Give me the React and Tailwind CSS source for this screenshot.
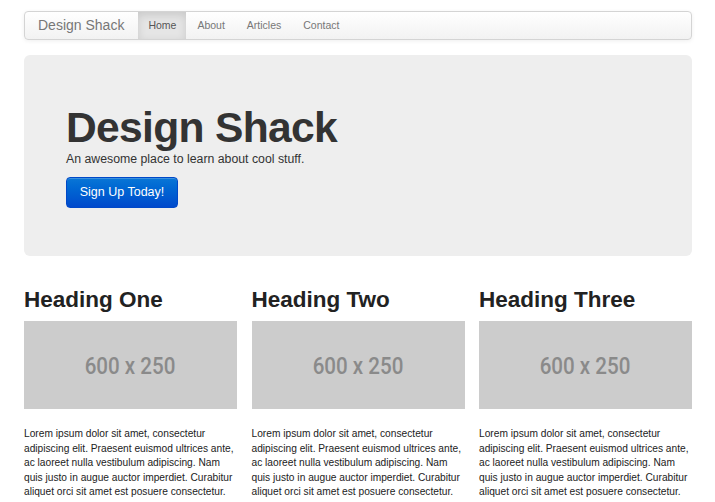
import React from "react";

const columns = ["Heading One", "Heading Two", "Heading Three"];

const lorem =
  "Lorem ipsum dolor sit amet, consectetur adipiscing elit. Praesent euismod ultrices ante, ac laoreet nulla vestibulum adipiscing. Nam quis justo in augue auctor imperdiet. Curabitur aliquet orci sit amet est posuere consectetur.";

export default function App() {
  return (
    <div className="min-h-[502px] bg-white pl-6 pr-[23px] pt-[11px] text-[#333] font-['Liberation_Sans',Arial,sans-serif]">
      {/* NAVBAR */}
      <div className="flex h-[29px] items-stretch rounded-[4px] border border-[#d4d4d4] bg-gradient-to-b from-white to-[#f2f2f2] shadow-[0_1px_4px_rgba(0,0,0,0.065)]">
        <span className="flex items-center pl-[13px] pr-[14px] text-[14px] text-[#777]">
          Design Shack
        </span>
        <a className="flex w-[48px] items-center justify-center bg-[#e5e5e5] text-[10.5px] text-[#555] shadow-[inset_0_3px_8px_rgba(0,0,0,0.125)]">
          Home
        </a>
        <a className="flex items-center px-[11px] text-[10.5px] text-[#777]">About</a>
        <a className="flex items-center px-[11px] text-[10.5px] text-[#777]">Articles</a>
        <a className="flex items-center px-[11px] text-[10.5px] text-[#777]">Contact</a>
      </div>

      {/* HERO */}
      <div className="mt-[15px] h-[201px] rounded-[6px] bg-[#eeeeee] px-[42px] pt-[51px]">
        <h1 className="text-[42.6px] font-bold leading-none tracking-[-0.7px] text-[#333]">
          Design Shack
        </h1>
        <p className="mt-[3px] text-[12.3px] leading-[14px] text-[#333]">
          An awesome place to learn about cool stuff.
        </p>
        <button className="mt-[11px] h-[31px] w-[112px] rounded-[4px] border border-[#0048c8] bg-gradient-to-b from-[#0a76d6] to-[#0049cc] text-[12.5px] text-white shadow-[inset_0_1px_0_rgba(255,255,255,0.2)]">
          Sign Up Today!
        </button>
      </div>

      {/* COLUMNS */}
      <div className="mt-[30px] grid grid-cols-3 gap-[14.5px]">
        {columns.map((title) => (
          <div key={title}>
            <h2 className="text-[22.5px] font-bold leading-[28px] text-[#222]">{title}</h2>
            <div className="mt-[7px] flex h-[88px] items-center justify-center overflow-hidden bg-[#cccccc]">
              <span className="inline-block translate-y-[1px] scale-x-[0.84] font-['Roboto',sans-serif] text-[24.5px] font-medium text-[#8a8a8a]">
                600 x 250
              </span>
            </div>
            <p className="mt-[18px] text-[10.2px] leading-[14.5px] text-[#222]">{lorem}</p>
          </div>
        ))}
      </div>
    </div>
  );
}
